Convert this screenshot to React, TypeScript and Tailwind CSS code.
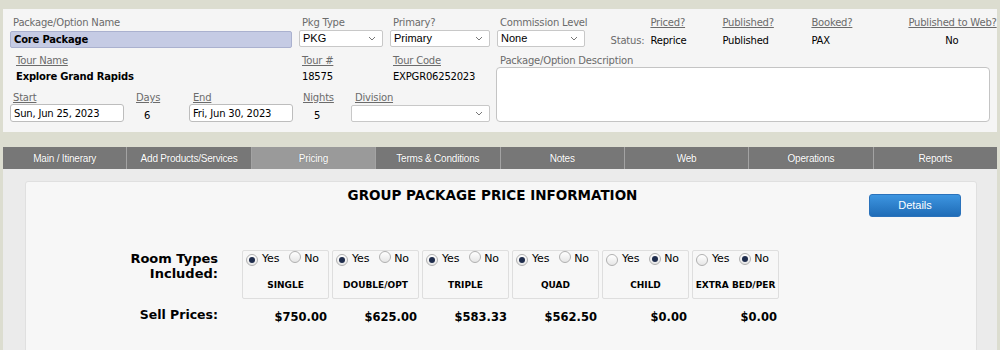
const rooms = [
  { name: "SINGLE", yes: true, price: "$750.00" },
  { name: "DOUBLE/OPT", yes: true, price: "$625.00" },
  { name: "TRIPLE", yes: true, price: "$583.33" },
  { name: "QUAD", yes: true, price: "$562.50" },
  { name: "CHILD", yes: false, price: "$0.00" },
  { name: "EXTRA BED/PER", yes: false, price: "$0.00" },
];

const tabs = [
  "Main / Itinerary",
  "Add Products/Services",
  "Pricing",
  "Terms & Conditions",
  "Notes",
  "Web",
  "Operations",
  "Reports",
];

function Label({ text, link = false }: { text: string; link?: boolean }) {
  return (
    <div className={`h-[13px] whitespace-nowrap text-[10px] leading-[13px] text-[#6b6b6b] ${link ? "underline" : ""}`}>
      {text}
    </div>
  );
}

function Chevron() {
  return (
    <svg width="8" height="5" viewBox="0 0 8 5" className="shrink-0">
      <path d="M1 1l3 3 3-3" fill="none" stroke="#777" strokeWidth="1" />
    </svg>
  );
}

function Select({ value, w }: { value: string; w: string }) {
  return (
    <div
      className={`${w} flex h-[17px] items-center justify-between rounded-[2px] border border-[#c8c8c8] bg-white pl-[3px] pr-[6px] font-['Liberation_Sans',sans-serif] text-[11px] tracking-normal text-black`}
    >
      <span>{value}</span>
      <Chevron />
    </div>
  );
}

function Radio({ on }: { on: boolean }) {
  return (
    <span className="inline-flex h-[12px] w-[12px] items-center justify-center rounded-full border border-[#b0b0b0] bg-[linear-gradient(#fff,#e6e6e6)]">
      {on && <span className="h-[6px] w-[6px] rounded-full bg-[#1f2d4d]" />}
    </span>
  );
}

export default function App() {
  return (
    <div className="h-[350px] w-[1000px] overflow-hidden bg-[#dcddd0] pl-[3px] pr-[3px] pt-[9px] font-['DejaVu_Sans',Verdana,sans-serif] tracking-[-0.2px] text-black">
      {/* header panel */}
      <div className="h-[123px] bg-[#f5f5f5] pl-[7px] pt-[7px]">
        <div className="flex">
          <div className="w-[282px] shrink-0">
            <div className="pl-[3px]">
              <Label text="Package/Option Name" />
            </div>
            <div className="mt-[2px] flex h-[17px] items-center rounded-[2px] border border-[#aab1cf] bg-[#c5cbe4] pl-[3px] text-[10px] font-bold">
              Core Package
            </div>
          </div>
          <div className="ml-[7px] shrink-0">
            <div className="pl-[3px]">
              <Label text="Pkg Type" />
            </div>
            <div className="mt-[1px]">
              <Select value="PKG" w="w-[84px]" />
            </div>
          </div>
          <div className="ml-[7px] shrink-0">
            <div className="pl-[3px]">
              <Label text="Primary?" />
            </div>
            <div className="mt-[1px]">
              <Select value="Primary" w="w-[100px]" />
            </div>
          </div>
          <div className="ml-[7px] shrink-0">
            <div className="pl-[3px]">
              <Label text="Commission Level" />
            </div>
            <div className="mt-[1px]">
              <Select value="None" w="w-[88px]" />
            </div>
          </div>
          <div className="flex shrink-0 text-[10px] leading-[13px]">
            <div className="w-[57px] pt-[18px] text-right text-[#6b6b6b]">Status:</div>
            <div className="ml-[6px] w-[72px]">
              <Label text="Priced?" link />
              <div className="mt-[5px]">Reprice</div>
            </div>
            <div className="w-[89px]">
              <Label text="Published?" link />
              <div className="mt-[5px]">Published</div>
            </div>
            <div className="w-[97px]">
              <Label text="Booked?" link />
              <div className="mt-[5px]">PAX</div>
            </div>
            <div className="w-[87px] text-center">
              <Label text="Published to Web?" link />
              <div className="mt-[5px]">No</div>
            </div>
          </div>
        </div>

        <div className="mt-[6px] flex">
          <div className="w-[480px] shrink-0">
            <div className="flex">
              <div className="w-[289px] shrink-0 pl-[6px]">
                <Label text="Tour Name" link />
                <div className="mt-[3px] text-[10px] font-bold leading-[13px]">Explore Grand Rapids</div>
              </div>
              <div className="w-[91px] shrink-0 pl-[3px]">
                <Label text="Tour #" link />
                <div className="mt-[3px] text-[10px] leading-[13px]">18575</div>
              </div>
              <div className="shrink-0 pl-[3px]">
                <Label text="Tour Code" link />
                <div className="mt-[3px] text-[10px] leading-[13px]">EXPGR06252023</div>
              </div>
            </div>
            <div className="mt-[8px] flex">
              <div className="w-[114px] shrink-0">
                <div className="pl-[3px]">
                  <Label text="Start" link />
                </div>
                <div className="flex h-[18px] items-center rounded-[3px] border border-[#bdbdbd] bg-white pl-[3px] text-[10px]">
                  Sun, Jun 25, 2023
                </div>
              </div>
              <div className="ml-[12px] w-[53px] shrink-0">
                <Label text="Days" link />
                <div className="mt-[4px] pl-[8px] text-[10px]">6</div>
              </div>
              <div className="w-[104px] shrink-0">
                <div className="pl-[4px]">
                  <Label text="End" link />
                </div>
                <div className="flex h-[18px] items-center rounded-[3px] border border-[#bdbdbd] bg-white pl-[3px] text-[10px]">
                  Fri, Jun 30, 2023
                </div>
              </div>
              <div className="ml-[10px] w-[48px] shrink-0">
                <Label text="Nights" link />
                <div className="mt-[4px] pl-[11px] text-[10px]">5</div>
              </div>
              <div className="shrink-0">
                <div className="pl-[4px]">
                  <Label text="Division" link />
                </div>
                <div className="mt-[1px]">
                  <Select value="" w="w-[139px]" />
                </div>
              </div>
            </div>
          </div>
          <div className="ml-[6px] shrink-0">
            <div className="pl-[4px]">
              <Label text="Package/Option Description" />
            </div>
            <div className="h-[55px] w-[494px] rounded-[4px] border border-[#c4c4c4] bg-white" />
          </div>
        </div>
      </div>

      {/* tabs */}
      <div className="mt-[15px] flex h-[22px] font-['Liberation_Sans',Arial,sans-serif] text-[10px] tracking-[-0.2px] text-white">
        {tabs.map((t, i) => (
          <div
            key={t}
            className={`flex flex-1 items-center justify-center ${i > 0 ? "border-l border-[#a3a3a3]" : ""} ${t === "Pricing" ? "bg-[#9a9a9a]" : "bg-[#777777]"} [text-shadow:0_0_1px_rgba(0,0,0,0.3)]`}
          >
            {t}
          </div>
        ))}
      </div>

      {/* content */}
      <div className="h-[200px] bg-[#ebebeb] pl-[22px] pr-[20px] pt-[12px]">
        <div className="h-[200px] rounded-[3px] border border-[#e0e0e0] bg-[#f7f7f7]">
          <div className="flex items-start pr-[15px] pt-[4px]">
            <div className="flex-1 pl-[90px] text-center text-[13.5px] font-bold leading-[18px] tracking-normal">
              GROUP PACKAGE PRICE INFORMATION
            </div>
            <div className="mt-[8px] flex h-[23px] w-[92px] items-center justify-center rounded-[3px] border border-[#2a72bb] bg-[linear-gradient(#3d95e0,#1f6cb7)] font-['Liberation_Sans',Arial,sans-serif] text-[11px] tracking-normal text-white">
              Details
            </div>
          </div>

          <div className="mt-[33px] flex">
            <div className="w-[192px] pt-[1px] text-right text-[13px] font-bold leading-[15px] tracking-normal">
              Room Types
              <br />
              Included:
            </div>
            <div className="ml-[24px] flex gap-[3px]">
              {rooms.map((r) => (
                <div
                  key={r.name}
                  className="flex h-[49px] w-[87px] flex-col items-center rounded-[2px] border border-[#dedede] bg-[#f7f7f7] pt-[1px]"
                >
                  <div className="flex h-[15px] items-center self-start pl-[3px] text-[11px]">
                    <Radio on={r.yes} />
                    <span className="ml-[4px]">Yes</span>
                    <span className="ml-[10px]">
                      <Radio on={!r.yes} />
                    </span>
                    <span className="ml-[3px]">No</span>
                  </div>
                  <div className="mt-[12px] text-[9px] font-bold tracking-normal">{r.name}</div>
                </div>
              ))}
            </div>
          </div>

          <div className="mt-[8px] flex items-start">
            <div className="w-[192px] text-right text-[12.5px] font-bold leading-[15px] tracking-normal">Sell Prices:</div>
            <div className="ml-[24px] flex gap-[3px] pt-[3px]">
              {rooms.map((r) => (
                <div key={r.name} className="w-[87px] pr-[2px] text-right text-[11.5px] font-bold leading-[15px] tracking-normal">
                  {r.price}
                </div>
              ))}
            </div>
          </div>
        </div>
      </div>
    </div>
  );
}
